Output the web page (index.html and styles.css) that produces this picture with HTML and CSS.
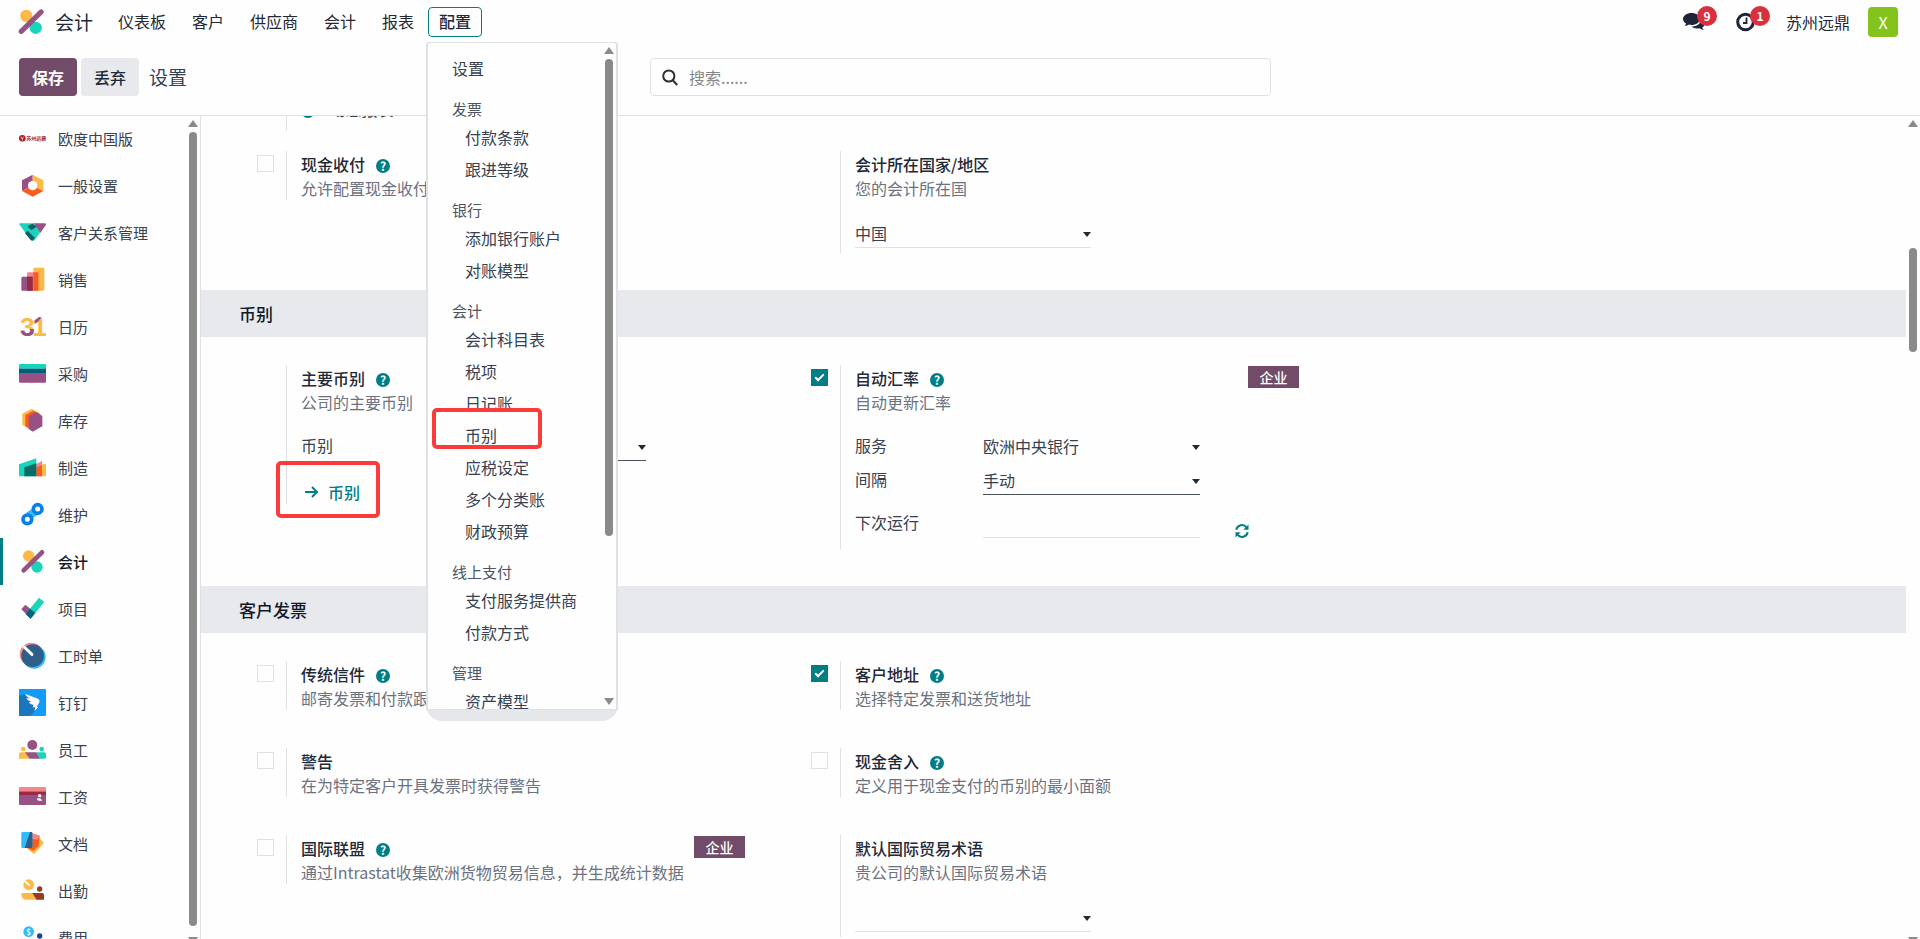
FILE: index.html
```html
<!DOCTYPE html>
<html lang="zh-CN">
  <head>
    <meta charset="utf-8">
    <title>会计 - 设置</title>
    <link rel="stylesheet" href="styles.css">
  </head>
  <body>
    <header>
      <nav class="navbar">
        <a class="brand" href="#">
          <svg class="brand-icon" viewBox="5 5 72 72"><circle cx="28" cy="24" r="17" fill="#fbb945"/><circle cx="54" cy="57" r="17" fill="#1ad3bb"/><path d="M14 67 69 13" stroke="#985184" stroke-width="14" stroke-linecap="round"/></svg>
          会计
        </a>
        <div class="menu">
          <button class="menu-item">仪表板</button>
          <button class="menu-item">客户</button>
          <button class="menu-item">供应商</button>
          <button class="menu-item">会计</button>
          <button class="menu-item">报表</button>
          <div class="menu-open">
            <button class="menu-item active">配置</button>
            <div class="dropdown">
              <div class="dropdown-body">
                <div class="dropdown-list">
                  <a class="top" href="#">设置</a>
                  <h6>发票</h6>
                  <a href="#">付款条款</a>
                  <a href="#">跟进等级</a>
                  <h6>银行</h6>
                  <a href="#">添加银行账户</a>
                  <a href="#">对账模型</a>
                  <h6>会计</h6>
                  <a href="#">会计科目表</a>
                  <a href="#">税项</a>
                  <a href="#">日记账</a>
                  <a class="marked" href="#">币别</a>
                  <a href="#">应税设定</a>
                  <a href="#">多个分类账</a>
                  <a href="#">财政预算</a>
                  <h6>线上支付</h6>
                  <a href="#">支付服务提供商</a>
                  <a href="#">付款方式</a>
                  <h6>管理</h6>
                  <a href="#">资产模型</a>
                </div>
                <div class="scrollbar">
                  <span class="arrow-up"></span>
                  <span class="thumb"></span>
                  <span class="arrow-down"></span>
                </div>
              </div>
            </div>
          </div>
        </div>
        <div class="systray">
          <button class="tray" aria-label="消息">
            <svg width="22" height="20" viewBox="0 0 22 20" fill="#1f2539"><path d="M8.500 1C3.800 1 0 3.700 0 7c0 1.900 1.200 3.500 3.100 4.600-.3 1.100-.9 1.800-1.600 2.500 1.800-.1 3.400-.7 4.600-1.500.8.200 1.600.3 2.400.3 4.700 0 8.500-2.700 8.500-6S13.200 1 8.500 1z"/><path d="M18.400 6.200c.2 4.700-4.300 8.300-10 8.300 1.300 1.300 3.400 2 5.800 2 .8 0 1.500-.1 2.200-.2 1.200.9 2.700 1.500 4.400 1.600-.8-.7-1.300-1.400-1.500-2.400 1.500-.9 2.500-2.400 2.500-4.100 0-2.100-1.300-4.100-3.400-5.200z"/></svg>
            <span class="badge">9</span>
          </button>
          <button class="tray" aria-label="活动">
            <svg width="19" height="20" viewBox="0 0 19 20" fill="none" stroke="#1f2539"><circle cx="9.500" cy="10" r="7.800" stroke-width="3"/><path d="M10.500 5.500v5.500H7" stroke-width="1.800"/></svg>
            <span class="badge">1</span>
          </button>
          <span class="company">苏州远鼎</span>
          <span class="avatar">X</span>
        </div>
      </nav>
      <div class="control-panel">
        <button class="btn btn-primary">保存</button>
        <button class="btn btn-secondary">丢弃</button>
        <h1>设置</h1>
        <label class="search">
          <svg width="16" height="17" viewBox="0 0 16 17" fill="none" stroke="#2b2f3a" stroke-width="2"><circle cx="6.800" cy="7" r="5.600"/><path d="m10.800 11.200 4.400 4.800"/></svg>
          <input type="text" placeholder="搜索......" aria-label="搜索">
        </label>
      </div>
    </header>

    <div class="content">
      <aside class="sidebar">
        <div class="apps">
          <a href="#"><svg viewBox="0 0 81 81"><circle cx="10" cy="40" r="10" fill="#a52030"/><path d="M6 35l4 7 4-7M10 40v7" stroke="#fff" stroke-width="2" fill="none"/><text x="22" y="46" font-size="15" font-weight="700" fill="#a52030">苏州远鼎</text></svg>欧度中国版</a>
          <a href="#"><svg viewBox="0 0 81 81"><path d="M41 8 9 25v32l32-16z" fill="#985184"/><path d="m41 8 32 17v32L41 41z" fill="#fbb945"/><path d="m9 57 32 17 32-17-32-16z" fill="#fc5b1f"/><circle cx="41" cy="41" r="14" fill="#fff"/></svg>一般设置</a>
          <a href="#"><svg viewBox="0 0 81 81"><path d="M3 13h42l18 28-16 22q-6 6-12 0L4 20q-6-6-1-7z" fill="#1ad3bb"/><path d="M44 13h33q6 1 3 6L64 42z" fill="#985184"/><path d="m26 22 14-8 13 9-14 9q-6 2-13-10zM18 43l8-8 22 22-7 7q-5 1-9-5z" fill="#0b5e6b"/></svg>客户关系管理</a>
          <a href="#"><svg viewBox="0 0 81 81"><path d="M47 5h25q4 0 4 4v61q0 4-4 4H43V9q0-4 4-4z" fill="#fbb945"/><path d="M28 19h30v55H24V23q0-4 4-4z" fill="#f78689"/><path d="M43 19h15v55H43z" fill="#fc5b1f"/><path d="M11 32h30v42H7V36q0-4 4-4z" fill="#985184"/><path d="M24 32h17v42H24z" fill="#962b48"/></svg>销售</a>
          <a href="#"><svg viewBox="0 0 81 81"><defs><linearGradient id="cal" x1="0" y1="0" x2="0" y2="1"><stop offset="0.550" stop-color="#fbb945"/><stop offset="0.550" stop-color="#985184"/></linearGradient></defs><text class="digit" x="3" y="70" fill="url(#cal)">3</text><text class="digit" x="40" y="70" fill="#fbb945">1</text><path d="m47 22 13-10h7L57 27l-10 5z" fill="#985184"/></svg>日历</a>
          <a href="#"><svg viewBox="0 0 81 81"><path d="M0 26V15q0-3 3-3h75q3 0 3 3v11z" fill="#1ad3bb"/><path d="M0 26h81v13H0z" fill="#005e7a"/><path d="M0 39h81v26q0 3-3 3H3q-3 0-3-3z" fill="#985184"/></svg>采购</a>
          <a href="#"><svg viewBox="0 0 81 81"><path d="m38 5 22 12v34L31 66 10 53V20z" fill="#fbb945"/><path d="m42 11 22 10v36L41 70 19 58V24z" fill="#fc5b1f"/><path d="m50 15 20 12v31L41 74 29 66V27z" fill="#985184"/></svg>库存</a>
          <a href="#"><svg viewBox="0 0 81 81"><path d="m0 31 52-18v54H0z" fill="#1ad3bb"/><path d="m67 32 14-3v38H67z" fill="#fbb945"/><path d="m52 31 17-11v47H52z" fill="#f78689"/><path d="m52 40 17-6v33H52z" fill="#fc5b1f"/><path d="m16 40 36-12v39H16z" fill="#0b6b68"/></svg>制造</a>
          <a href="#"><svg viewBox="0 0 81 81" fill="none"><path d="m28 45 22-14" stroke="#2ebcfa" stroke-width="24"/><circle cx="56" cy="24" r="13" stroke="#0a7fe8" stroke-width="11" fill="#fff"/><circle cx="25" cy="55" r="13" stroke="#0a7fe8" stroke-width="11" fill="#fff"/></svg>维护</a>
          <a class="active" href="#"><svg viewBox="0 0 81 81"><circle cx="29" cy="24" r="17" fill="#fbb945"/><circle cx="54" cy="57" r="17" fill="#1ad3bb"/><path d="M14 67 69 13" stroke="#985184" stroke-width="14" stroke-linecap="round"/></svg>会计</a>
          <a href="#"><svg viewBox="0 0 81 81"><path d="m7 43 12-14 31 25-15 17z" fill="#985184"/><path d="m60 8 16 13-41 50-15-14z" fill="#1ad3bb"/><path d="m33 41 15 12-13 18-15-14z" fill="#0b5e7a"/></svg>项目</a>
          <a href="#"><svg viewBox="0 0 81 81"><circle cx="37" cy="37" r="35" fill="#f78689"/><circle cx="45" cy="45" r="35" fill="#2ebcfa"/><circle cx="41" cy="41" r="34" fill="#2f5f88"/><path d="m10 16 6-6 26 24q3 4 0 7-4 3-7-1z" fill="#fff"/></svg>工时单</a>
          <a href="#"><svg viewBox="0 0 81 81"><rect width="81" height="81" rx="3" fill="#129bfa"/><path d="M0 20 24 15 60 55 34 81H0z" fill="#1a77bd"/><path d="m18 14 40 16q6 4 3 10l-8 13h6L46 67l3-12h-8l3-7q-11-1-15-8l9-1q-13-4-16-12l10 2Q20 21 18 14z" fill="#fff"/></svg>钉钉</a>
          <a href="#"><svg viewBox="0 0 81 81"><circle cx="40" cy="27" r="15" fill="#985184"/><circle cx="13" cy="39" r="7" fill="#fbb945"/><circle cx="68" cy="39" r="7" fill="#1ad3bb"/><path d="M5 49h16l11 19H0V54q0-5 5-5z" fill="#fbb945"/><path d="M18 49h34l12 19H32z" fill="#985184"/><path d="M52 49h24q5 0 5 5v9q0 5-5 5H63z" fill="#1ad3bb"/></svg>员工</a>
          <a href="#"><svg viewBox="0 0 81 81"><path d="M0 25V15q0-3 3-3h75q3 0 3 3v10z" fill="#f78689"/><path d="M0 25h81v11H0z" fill="#962b48"/><path d="M0 36h81v27q0 3-3 3H3q-3 0-3-3z" fill="#985184"/><circle cx="62" cy="38" r="5" fill="#fff"/><path d="M54 46h10l6 7H59q-5 0-5-7z" fill="#fff"/></svg>工资</a>
          <a href="#"><svg viewBox="0 0 81 81"><path d="m62 25 13 14L45 72 23 53z" fill="#fbb945"/><path d="m36 10 26 7-4 32-15 14-20-10z" fill="#fc5b1f"/><path d="m38 10 22 6-4 14-16-4z" fill="#f78689"/><rect x="7" y="6" width="33" height="48" rx="4" fill="#2ebcfa"/><path d="M33 6h3q4 0 4 4v40q0 4-4 4H17z" fill="#2f5f88"/></svg>文档</a>
          <a href="#"><svg viewBox="0 0 81 81"><circle cx="29" cy="23" r="16" fill="#fbb945"/><path d="m19 14 12 11" stroke="#fff" stroke-width="6" stroke-linecap="round"/><circle cx="62" cy="36" r="8" fill="#953b24"/><path d="M7 48h40l12 20H20Q7 68 7 48z" fill="#fbb945"/><path d="M40 48h30q5 0 5 5v15H53z" fill="#953b24"/></svg>出勤</a>
          <a href="#"><svg viewBox="0 0 81 81"><circle cx="29" cy="23" r="16" fill="#2ebcfa"/><text x="22" y="32" font-size="24" font-weight="700" fill="#fff">$</text><circle cx="62" cy="36" r="8" fill="#144496"/><path d="M7 48h40l12 20H20Q7 68 7 48z" fill="#2ebcfa"/></svg>费用</a>
        </div>
        <div class="scrollbar">
          <span class="arrow-up"></span>
          <span class="thumb"></span>
          <span class="arrow-down"></span>
        </div>
      </aside>

      <main>
        <div class="settings">
          <div class="grid scrolled">
            <div class="setting">
              <div class="pane">
                <span class="help">?</span>
                <span class="clipped">动态报表</span>
              </div>
            </div>
          </div>
          <div class="grid first">
            <div class="setting">
              <input type="checkbox" id="cash">
              <div class="pane">
                <label for="cash">现金收付</label><span class="help">?</span>
                <p>允许配置现金收付制税项</p>
              </div>
            </div>
            <div class="setting">
              <div class="pane long">
                <label for="country">会计所在国家/地区</label>
                <p>您的会计所在国</p>
                <div class="select wide"><select id="country"><option>中国</option></select></div>
              </div>
            </div>
          </div>

          <h2>币别</h2>
          <div class="grid">
            <div class="setting">
              <div class="pane">
                <b>主要币别</b><span class="help">?</span>
                <p>公司的主要币别</p>
                <div class="fields">
                  <label for="currency">币别</label>
                  <div class="select dark"><select id="currency"><option>CNY</option></select></div>
                </div>
                <a class="link marked" href="#"><svg width="14" height="12" viewBox="0 0 14 12" fill="none" stroke="#017e84" stroke-width="2"><path d="M0 6h12M7 1l5 5-5 5"/></svg>币别</a>
              </div>
            </div>
            <div class="setting">
              <input type="checkbox" id="rate" checked>
              <div class="pane rates">
                <label for="rate">自动汇率</label><span class="help">?</span>
                <span class="enterprise">企业</span>
                <p>自动更新汇率</p>
                <div class="fields">
                  <label for="service">服务</label>
                  <div class="select plain"><select id="service"><option>欧洲中央银行</option></select></div>
                  <label for="interval">间隔</label>
                  <div class="select dark"><select id="interval"><option>手动</option></select></div>
                </div>
                <div class="fields next-run">
                  <label for="next">下次运行</label>
                  <input type="text" id="next">
                  <button class="refresh" aria-label="刷新">
                    <svg width="14" height="14" viewBox="0 0 14 14" fill="none" stroke="#017e84" stroke-width="2"><path d="M1.300 5.800A5.800 5.800 0 0 1 11.500 3.300M12.700 8.200A5.800 5.800 0 0 1 2.500 10.700"/><path d="M13.500.5v5.200H8.300zM.5 13.500V8.300h5.200z" fill="#017e84" stroke="none"/></svg>
                  </button>
                </div>
              </div>
            </div>
          </div>

          <h2>客户发票</h2>
          <div class="grid">
            <div class="setting">
              <input type="checkbox" id="mail">
              <div class="pane">
                <label for="mail">传统信件</label><span class="help">?</span>
                <p>邮寄发票和付款跟进</p>
              </div>
            </div>
            <div class="setting">
              <input type="checkbox" id="address" checked>
              <div class="pane">
                <label for="address">客户地址</label><span class="help">?</span>
                <p>选择特定发票和送货地址</p>
              </div>
            </div>
            <div class="setting">
              <input type="checkbox" id="warning">
              <div class="pane">
                <label for="warning">警告</label>
                <p>在为特定客户开具发票时获得警告</p>
              </div>
            </div>
            <div class="setting">
              <input type="checkbox" id="rounding">
              <div class="pane">
                <label for="rounding">现金舍入</label><span class="help">?</span>
                <p>定义用于现金支付的币别的最小面额</p>
              </div>
            </div>
            <div class="setting">
              <input type="checkbox" id="intrastat">
              <div class="pane">
                <label for="intrastat">国际联盟</label><span class="help">?</span>
                <span class="enterprise">企业</span>
                <p>通过Intrastat收集欧洲货物贸易信息，并生成统计数据</p>
              </div>
            </div>
            <div class="setting">
              <div class="pane long">
                <label for="incoterm">默认国际贸易术语</label>
                <p>贵公司的默认国际贸易术语</p>
                <div class="select wide"><select id="incoterm"><option></option></select></div>
              </div>
            </div>
          </div>
        </div>
        <div class="scrollbar">
          <span class="arrow-up"></span>
          <span class="thumb"></span>
          <span class="arrow-down"></span>
        </div>
      </main>
    </div>
  </body>
</html>
```
FILE: styles.css
```css
*,
*::after {
  box-sizing: border-box;
}

body {
  margin: 0;
  height: 100vh;
  overflow: hidden;
  display: flex;
  flex-direction: column;
  background-color: #fefefe;
  color: #374151;
  font-family: "Noto Sans CJK SC", sans-serif;
  font-size: 16px;
  line-height: 24px;
}

a {
  color: inherit;
  text-decoration: none;
}

button, input, select {
  font: inherit;
  color: inherit;
  border: none;
  background: none;
  margin: 0;
  padding: 0;
}

button {
  cursor: pointer;
}

header {
  border-bottom: 1px solid #dee2e6;
}

/* top bar */
.navbar {
  display: flex;
  align-items: center;
  height: 44px;
  padding: 0 22px 0 18px;
  color: #1f2937;
}

.brand {
  display: flex;
  align-items: center;
  gap: 11px;
  width: 88px;
  font-size: 19px;
}

.brand-icon {
  width: 26px;
  height: 26px;
}

.menu {
  display: flex;
  gap: 2px;
}

.menu-item {
  height: 30px;
  padding: 0 12px 2px;
  border-radius: 4px;
}

.menu-item.active {
  padding: 0 10px 2px;
  border: 1px solid #017e84;
  font-weight: 500;
}

.menu-open {
  position: relative;
}

.dropdown {
  position: absolute;
  z-index: 10;
  top: 35px;
  left: -2px;
  width: 192px;
  padding-bottom: 11px;
  background-color: #e5e7eb;
  border-radius: 4px 4px 16px 16px;
}

.dropdown-body {
  display: flex;
  justify-content: space-between;
  height: 668px;
  overflow: hidden;
  background-color: #fefefe;
  border: 1px solid #dee2e6;
  border-width: 1px 2px;
  border-radius: 4px 4px 0 0;
  color: #374151;
}

.dropdown-list {
  padding: 9px 0 0 24px;
}

.dropdown-list a {
  display: block;
  position: relative;
  padding: 4px 0 4px 13px;
  white-space: nowrap;
}

.dropdown-list a.top {
  padding-left: 0;
}

.dropdown-list h6 {
  margin: 0;
  padding-top: 13px;
  font-size: 15px;
  font-weight: 400;
  color: #4b5563;
}

.marked::after {
  content: "";
  position: absolute;
  border: 4px solid #fb3a3a;
  border-radius: 5px;
}

.dropdown-list .marked::after {
  top: -11px;
  left: -20px;
  width: 110px;
  height: 41px;
}

.systray {
  display: flex;
  align-items: center;
  margin-left: auto;
}

.tray {
  position: relative;
  display: flex;
  margin-right: 31px;
}

.badge {
  position: absolute;
  top: -6px;
  left: 14px;
  width: 20px;
  height: 20px;
  border-radius: 10px;
  background-color: #d9303e;
  color: #fff;
  font-size: 12px;
  font-weight: 700;
  line-height: 20px;
}

.company {
  margin-right: 18px;
}

.avatar {
  width: 30px;
  height: 30px;
  border-radius: 4px;
  background-color: #84c31b;
  color: #fff;
  line-height: 30px;
  text-align: center;
}

/* control panel */
.control-panel {
  display: flex;
  align-items: center;
  gap: 4px;
  padding: 14px 19px 19px;
}

.btn {
  width: 58px;
  height: 38px;
  border-radius: 4px;
  font-weight: 500;
}

.btn-primary {
  background-color: #714b67;
  color: #fff;
  font-weight: 700;
}

.btn-secondary {
  background-color: #e7e9ed;
  color: #1f2937;
}

h1 {
  width: 497px;
  margin: 0;
  padding-left: 6px;
  font-size: 19px;
  font-weight: 400;
}

.search {
  display: flex;
  align-items: center;
  gap: 11px;
  width: 33%;
  max-width: 621px;
  height: 38px;
  margin-left: 6px;
  padding: 0 11px;
  border: 1px solid #dee2e6;
  border-radius: 4px;
}

.search input {
  flex: 1;
}

.search input::placeholder {
  color: #868686;
}

.content {
  flex: 1;
  display: flex;
  min-height: 0;
}

/* scrollbars */
.scrollbar {
  flex: none;
  display: flex;
  flex-direction: column;
  align-items: center;
  width: 14px;
  padding-top: 4px;
}

.arrow-up,
.arrow-down {
  flex: none;
  border: 5px solid transparent;
}

.arrow-up {
  border-top: none;
  border-bottom: 7px solid #8a8a8a;
}

.arrow-down {
  border-bottom: none;
  border-top: 7px solid #8a8a8a;
  margin-top: auto;
  margin-bottom: -5px;
}

.thumb {
  flex: none;
  width: 8px;
  height: 97%;
  margin-top: 5px;
  border-radius: 4px;
  background-color: #8a8a8a;
}

.dropdown .scrollbar {
  padding-bottom: 9px;
}

.dropdown .thumb {
  height: 73%;
}

main .thumb {
  height: 104px;
  margin-top: 121px;
}

/* sidebar */
.sidebar {
  flex: none;
  display: flex;
  justify-content: space-between;
  width: 201px;
  overflow: hidden;
  border-right: 1px solid #dee2e6;
}

.apps {
  flex: 1;
  margin-top: -1px;
}

.apps a {
  display: flex;
  align-items: center;
  gap: 12px;
  height: 47px;
  padding-left: 19px;
  font-size: 15px;
}

.apps a.active {
  padding-left: 16px;
  border-left: 3px solid #017e84;
  color: #111827;
  font-weight: 500;
}

.apps svg {
  width: 27px;
  height: 27px;
}

.digit {
  font: bold 80px "Liberation Sans", sans-serif;
}

/* settings */
main {
  flex: 1;
  display: flex;
  overflow: hidden;
}

.settings {
  flex: 1;
}

h2 {
  margin: 0;
  padding: 0 38px;
  font-size: 17px;
  font-weight: 500;
  line-height: 47px;
  color: #111827;
  background-color: #e7e9ed;
}

.grid {
  display: grid;
  grid-template-columns: 1fr 1fr;
  gap: 38px 66px;
  max-width: 1098px;
  padding: 28px 0 37px 56px;
}

.grid.scrolled {
  margin-top: -34px;
  padding: 0 0 0 56px;
}

.grid.first {
  padding-top: 20px;
}

.setting {
  display: grid;
  grid-template-columns: 17px 1fr;
  gap: 12px;
  align-items: start;
}

.setting input[type="checkbox"] {
  appearance: none;
  position: relative;
  width: 17px;
  height: 17px;
  margin-top: 4px;
  border: 1px solid #dee2e6;
}

.setting input[type="checkbox"]:checked {
  border-color: #017e84;
  background-color: #017e84;
}

.setting input[type="checkbox"]:checked::after {
  content: "";
  position: absolute;
  top: 2px;
  left: 5px;
  width: 5px;
  height: 9px;
  border: solid #fff;
  border-width: 0 2px 2px 0;
  transform: rotate(45deg);
}

.pane {
  grid-column: 2;
  position: relative;
  min-height: 49px;
  padding: 1px 0 0 14px;
  border-left: 1px solid #dee2e6;
}

.scrolled .pane {
  padding-top: 15px;
}

.pane > label,
.pane > b {
  color: #1f2937;
  font-weight: 500;
}

.pane p {
  margin: 0;
  color: #6b7280;
  white-space: nowrap;
}

.pane.long {
  padding-bottom: 5px;
}

.help {
  display: inline-block;
  width: 14px;
  height: 14px;
  margin-left: 11px;
  border-radius: 7px;
  background-color: #017e84;
  color: #fff;
  font-size: 12px;
  font-weight: 700;
  line-height: 14px;
  text-align: center;
}

.scrolled .help {
  margin-left: 0;
}

.clipped {
  margin-left: 11px;
}

.enterprise {
  position: absolute;
  top: 1px;
  right: 0;
  width: 51px;
  background-color: #714b67;
  color: #fff;
  font-size: 14px;
  font-weight: 500;
  line-height: 22px;
  text-align: center;
}

.select {
  position: relative;
  height: 31px;
  border-bottom: 1px solid #dee2e6;
}

.select::after {
  content: "";
  position: absolute;
  right: 0;
  top: 15px;
  border: 4px solid transparent;
  border-top: 5px solid #1f2937;
  border-bottom: none;
}

.select.wide {
  width: 236px;
  margin-top: 17px;
}

.select.dark {
  border-color: #495057;
}

.select.plain {
  border-color: transparent;
}

.select select {
  appearance: none;
  width: 100%;
  height: 30px;
  padding-top: 1px;
}

.fields {
  display: grid;
  grid-template-columns: 128px 217px auto;
  row-gap: 3px;
  margin-top: 16px;
  line-height: 30px;
}

.fields label {
  grid-column: 1;
}

.fields input {
  height: 31px;
  border-bottom: 1px solid #dee2e6;
}

.fields.next-run {
  margin-top: 12px;
}

.rates {
  padding-bottom: 11px;
}

.refresh {
  display: flex;
  align-items: end;
  width: 14px;
  margin-left: 35px;
}

.link {
  position: relative;
  display: inline-flex;
  align-items: center;
  gap: 9px;
  margin: 19px 0 0 4px;
  color: #017e84;
  font-weight: 500;
  vertical-align: top;
}

.link.marked::after {
  inset: -19px -20px -14px -29px;
}
```
